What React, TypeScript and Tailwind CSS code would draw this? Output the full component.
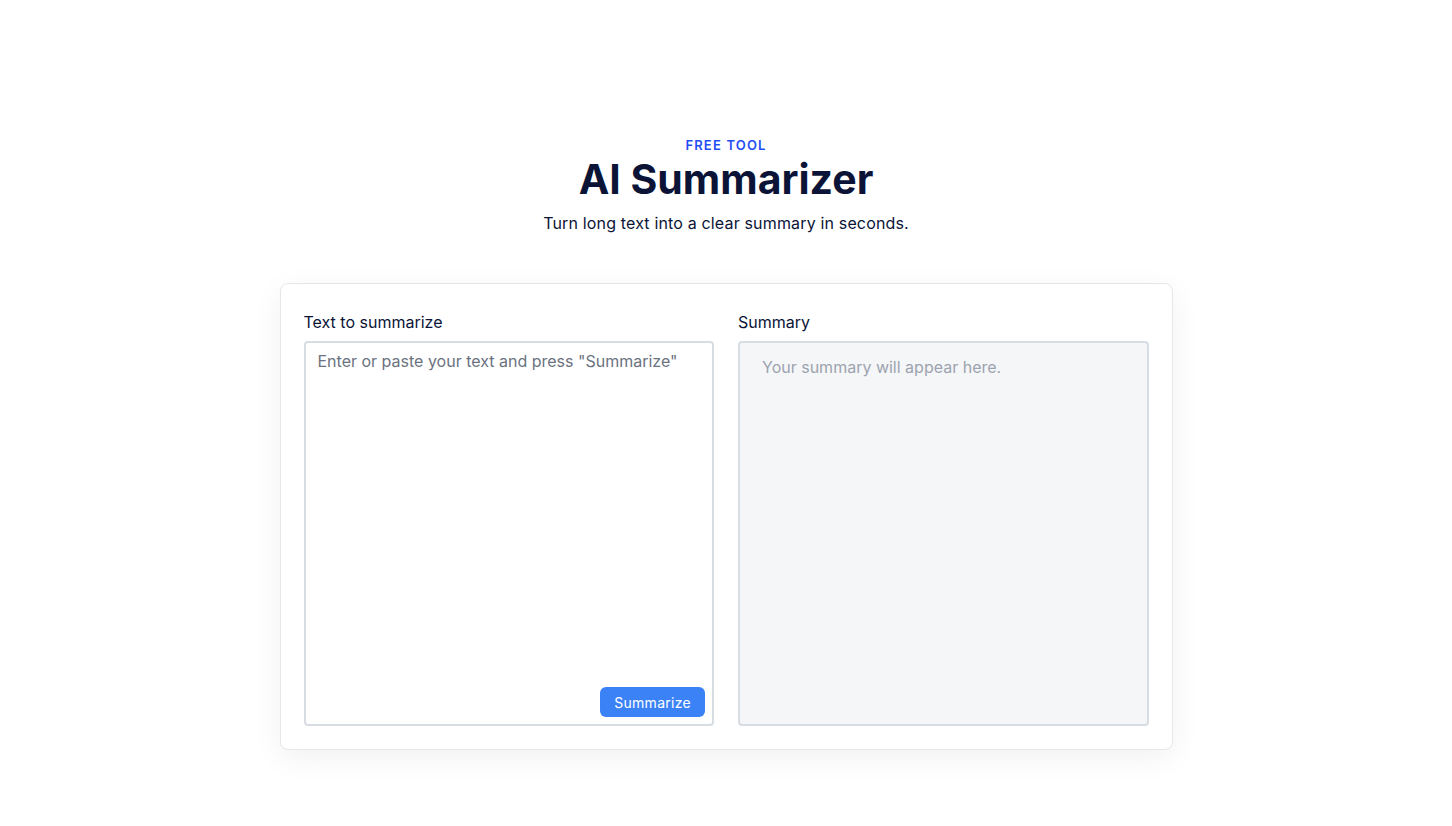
import React, { useState } from "react";

const App = () => {
  const [text, setText] = useState("");

  return (
    <div
      className="min-h-screen w-full bg-white flex flex-col items-center pt-[135px]"
      style={{ fontFamily: "Inter, 'Noto Sans', sans-serif" }}
    >
      <p className="text-[13px] leading-5 font-semibold tracking-[0.09em] text-[#1f4ef5]">
        FREE TOOL
      </p>
      <h1 className="mt-0 text-[41px] leading-[48px] font-bold text-[#0b1437]">
        AI Summarizer
      </h1>
      <p className="mt-[8px] text-[16px] leading-6 tracking-[0.01em] text-[#0b1437]">
        Turn long text into a clear summary in seconds.
      </p>

      <div className="mt-[48px] w-[893px] rounded-lg border border-[#e5e7eb] bg-white px-[23px] pt-[27px] pb-[23px] shadow-[0_8px_30px_rgba(15,23,42,0.06)]">
        <div className="grid grid-cols-2 gap-6">
          <label className="flex flex-col">
            <span className="mb-[8px] text-[16px] leading-[22px] text-[#0b1437]">
              Text to summarize
            </span>
            <div className="relative">
              <textarea
                value={text}
                onChange={(e) => setText(e.target.value)}
                placeholder='Enter or paste your text and press "Summarize"'
                className="block h-[385px] w-full resize-none rounded-[4px] border-2 border-[#d8dce3] bg-white px-[12px] pt-[6px] text-[16px] leading-6 text-[#0b1437] placeholder:text-[#6b7280] outline-none"
              />
              <button
                type="button"
                className="absolute bottom-[9px] right-[9px] h-[30px] rounded-md bg-[#3b82f6] px-[14px] text-[14px] tracking-[0.02em] text-white"
              >
                Summarize
              </button>
            </div>
          </label>

          <div className="flex flex-col">
            <span className="mb-[8px] text-[16px] leading-[22px] text-[#0b1437]">
              Summary
            </span>
            <div className="h-[385px] rounded-[4px] border-2 border-[#d8dce3] bg-[#f5f6f8] px-[22px] pt-[12px] text-[16px] leading-6 text-[#9ca3af]">
              Your summary will appear here.
            </div>
          </div>
        </div>
      </div>
    </div>
  );
};

export default App;
